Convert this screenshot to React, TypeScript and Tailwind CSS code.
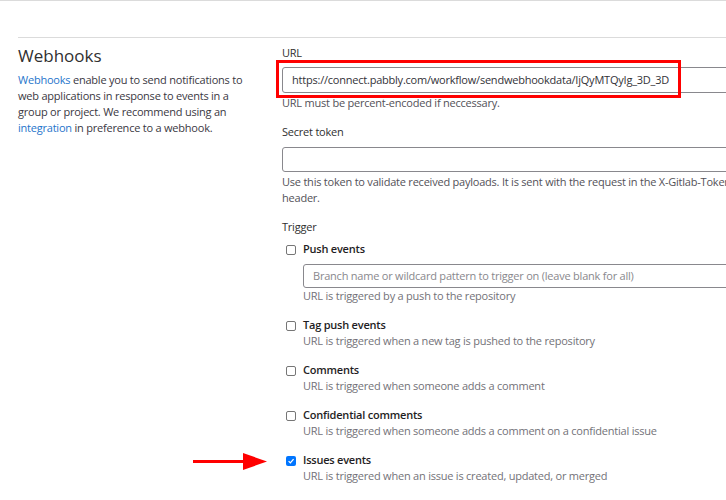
import React from "react";

type Trigger = {
  label: string;
  help: string;
  checked?: boolean;
  branchInput?: boolean;
};

const TRIGGERS: Trigger[] = [
  { label: "Push events", help: "URL is triggered by a push to the repository", branchInput: true },
  { label: "Tag push events", help: "URL is triggered when a new tag is pushed to the repository" },
  { label: "Comments", help: "URL is triggered when someone adds a comment" },
  { label: "Confidential comments", help: "URL is triggered when someone adds a comment on a confidential issue" },
  { label: "Issues events", help: "URL is triggered when an issue is created, updated, or merged", checked: true },
];

function Checkbox({ checked }: { checked?: boolean }) {
  if (checked) {
    return (
      <span className="mt-[4px] flex h-[10px] w-[10px] shrink-0 items-center justify-center rounded-[2px] bg-[#0075ff]">
        <svg viewBox="0 0 10 10" className="h-[8px] w-[8px]">
          <path d="M2 5.2 L4.2 7.4 L8.2 2.6" fill="none" stroke="#fff" strokeWidth="1.6" />
        </svg>
      </span>
    );
  }
  return <span className="mt-[4px] block h-[10px] w-[10px] shrink-0 rounded-[2px] border border-[#767676] bg-white" />;
}

export default function App() {
  return (
    <div className="relative h-[500px] w-[726px] overflow-hidden bg-white font-['Open_Sans',sans-serif] text-[11px] leading-[16px] tracking-[-0.22px] text-[#303030]">
      <div className="h-px bg-[#dbdbdb]" />

      <div className="ml-[18px] mt-[36px] flex border-t border-[#dbdbdb]">
        {/* Left description */}
        <aside className="w-[264px] shrink-0 pr-[26px] pt-[6px]">
          <h4 className="text-[17px] leading-[24px] tracking-normal text-[#303030]">Webhooks</h4>
          <p className="mt-[4px] text-[#3a383f]">
            <span className="text-[#1f75cb]">Webhooks</span> enable you to send notifications to web applications in
            response to events in a group or project. We recommend using an{" "}
            <span className="text-[#1f75cb]">integration</span> in preference to a webhook.
          </p>
        </aside>

        {/* Form */}
        <div className="w-[500px] shrink-0 pt-[7px]">
          <div>URL</div>
          <div className="mt-[6px] flex h-[26px] items-center rounded-[3px] border border-[#89888d] px-[9px] text-[#333238]">
            https://connect.pabbly.com/workflow/sendwebhookdata/IjQyMTQyIg_3D_3D
          </div>
          <p className="mt-[2px] text-[#535158]">URL must be percent-encoded if neccessary.</p>

          <div className="mt-[13px]">Secret token</div>
          <div className="mt-[7px] h-[25px] rounded-[3px] border border-[#89888d]" />
          <p className="mt-[2px] text-[#535158]">
            Use this token to validate received payloads. It is sent with the request in the X-Gitlab-Token HTTP
            header.
          </p>

          <div className="mt-[13px]">Trigger</div>
          <div className="mt-[6px] flex flex-col gap-[13px] pl-[4px]">
            {TRIGGERS.map((t) => (
              <div key={t.label} className="flex gap-[7px]">
                <Checkbox checked={t.checked} />
                <div className="flex-1">
                  <div className="font-semibold text-[#1f1e24]">{t.label}</div>
                  {t.branchInput && (
                    <div className="mt-[7px] flex h-[24px] items-center rounded-[3px] border border-[#89888d] px-[9px] text-[#89888d]">
                      Branch name or wildcard pattern to trigger on (leave blank for all)
                    </div>
                  )}
                  <div className="text-[#737278]">{t.help}</div>
                </div>
              </div>
            ))}
          </div>
        </div>
      </div>

      {/* Annotations */}
      <div className="absolute left-[276px] top-[60px] h-[38px] w-[405px] border-[3px] border-[#ff0000]" />
      <svg className="absolute left-[190px] top-[450px]" width="80" height="24" viewBox="0 0 80 24">
        <rect x="3" y="10" width="52" height="3" fill="#ff0000" />
        <polygon points="53,3 77,11.5 53,20" fill="#ff0000" />
      </svg>
    </div>
  );
}
